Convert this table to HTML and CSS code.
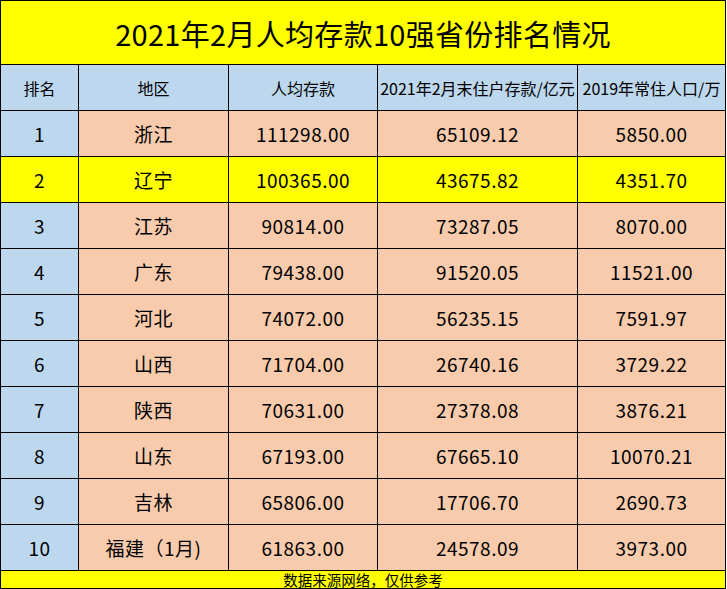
FILE: index.html
```html
<!DOCTYPE html>
<html lang="zh">
<head>
<meta charset="utf-8">
<title>2021年2月人均存款10强省份排名情况</title>
<link rel="stylesheet" href="styles.css">
</head>
<body>
<div class="sheet">
  <div class="cell title">2021年2月人均存款10强省份排名情况</div>

  <div class="cell head">排名</div>
  <div class="cell head">地区</div>
  <div class="cell head">人均存款</div>
  <div class="cell head">2021年2月末住户存款/亿元</div>
  <div class="cell head">2019年常住人口/万</div>

  <div class="cell rank">1</div><div class="cell data">浙江</div><div class="cell data">111298.00</div><div class="cell data">65109.12</div><div class="cell data">5850.00</div>
  <div class="cell rank hl">2</div><div class="cell data hl">辽宁</div><div class="cell data hl">100365.00</div><div class="cell data hl">43675.82</div><div class="cell data hl">4351.70</div>
  <div class="cell rank">3</div><div class="cell data">江苏</div><div class="cell data">90814.00</div><div class="cell data">73287.05</div><div class="cell data">8070.00</div>
  <div class="cell rank">4</div><div class="cell data">广东</div><div class="cell data">79438.00</div><div class="cell data">91520.05</div><div class="cell data">11521.00</div>
  <div class="cell rank">5</div><div class="cell data">河北</div><div class="cell data">74072.00</div><div class="cell data">56235.15</div><div class="cell data">7591.97</div>
  <div class="cell rank">6</div><div class="cell data">山西</div><div class="cell data">71704.00</div><div class="cell data">26740.16</div><div class="cell data">3729.22</div>
  <div class="cell rank">7</div><div class="cell data">陕西</div><div class="cell data">70631.00</div><div class="cell data">27378.08</div><div class="cell data">3876.21</div>
  <div class="cell rank">8</div><div class="cell data">山东</div><div class="cell data">67193.00</div><div class="cell data">67665.10</div><div class="cell data">10070.21</div>
  <div class="cell rank">9</div><div class="cell data">吉林</div><div class="cell data">65806.00</div><div class="cell data">17706.70</div><div class="cell data">2690.73</div>
  <div class="cell rank">10</div><div class="cell data">福建（1月)</div><div class="cell data">61863.00</div><div class="cell data">24578.09</div><div class="cell data">3973.00</div>

  <div class="cell foot">数据来源网络，仅供参考</div>
</div>
</body>
</html>
```

FILE: styles.css
```css
html, body {
  margin: 0;
  padding: 0;
  background: #ffffff;
}

.sheet {
  display: grid;
  grid-template-columns: 78px 150px 149px 200px 148px;
  grid-template-rows: 64px 46px repeat(10, 46px) 18px;
  width: 725px;
  border-left: 1px solid #000;
  border-top: 1px solid #000;
  font-family: "Noto Sans CJK SC", "Microsoft YaHei", sans-serif;
  color: #000;
}

.cell {
  box-sizing: border-box;
  border-right: 1px solid #000;
  border-bottom: 1px solid #000;
  display: flex;
  align-items: center;
  justify-content: center;
  white-space: nowrap;
  overflow: visible;
}

.title {
  grid-column: 1 / -1;
  background: #ffff00;
  font-size: 29px;
  letter-spacing: 0.3px;
  line-height: 1;
  padding-top: 2px;
}

.head {
  background: #bdd7ee;
  font-size: 16px;
  line-height: 1;
}

.rank {
  background: #bdd7ee;
  font-size: 19px;
  letter-spacing: 0.5px;
  line-height: 1;
}

.data {
  background: #f8cbad;
  font-size: 19px;
  letter-spacing: 0.5px;
  line-height: 1;
}

.hl {
  background: #ffff00;
}

.foot {
  grid-column: 1 / -1;
  background: #ffff00;
  font-size: 14.5px;
  line-height: 16px;
  padding-top: 1px;
}
```
